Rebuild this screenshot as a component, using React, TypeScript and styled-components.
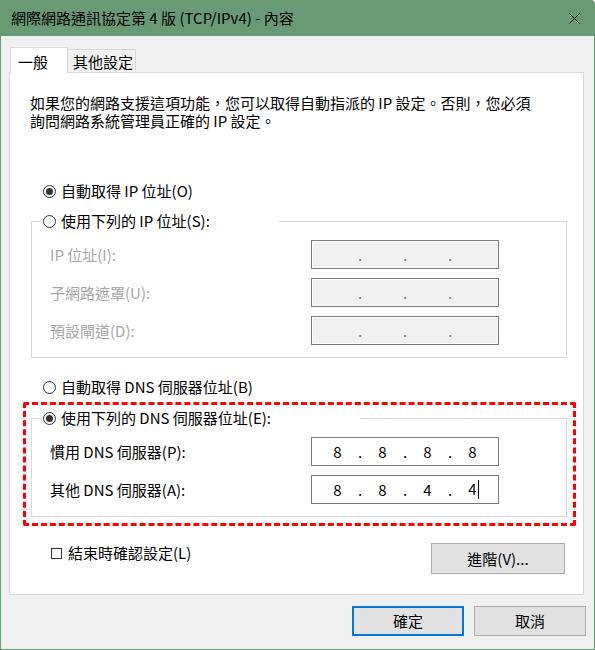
import React from 'react';
import styled, { createGlobalStyle } from 'styled-components';

const GlobalStyle = createGlobalStyle`
  html, body {
    margin: 0;
    padding: 0;
    background: #ffffff;
  }
  body {
    font-family: "Noto Sans CJK TC", "Noto Sans", sans-serif;
    font-size: 15px;
    color: #000000;
  }
  * {
    box-sizing: border-box;
  }
`;

const Window = styled.div`
  width: 595px;
  height: 650px;
  background: #689a76;
  padding: 0 1px 1px;
  border-top-right-radius: 4px;
  display: flex;
  flex-direction: column;
`;

const TitleBar = styled.div`
  height: 36px;
  flex: none;
  display: flex;
  align-items: center;
  justify-content: space-between;
  padding-left: 10px;
`;

const Title = styled.div`
  font-size: 15px;
  line-height: 18px;
  color: #000;
`;

const CloseButton = styled.div`
  width: 40px;
  height: 36px;
  display: flex;
  align-items: center;
  justify-content: center;
`;

const Body = styled.div`
  flex: 1;
  background: #f0f0f0;
  display: flex;
  flex-direction: column;
  padding-top: 11px;
`;

const TabRow = styled.div`
  display: flex;
  align-items: flex-end;
  margin-left: 9px;
  margin-bottom: -1px;
  position: relative;
  z-index: 1;
`;

const Tab = styled.div<{ $active?: boolean }>`
  line-height: 18px;
  height: ${(p) => (p.$active ? '26px' : '24px')};
  width: ${(p) => (p.$active ? '58px' : '68px')};
  padding: ${(p) => (p.$active ? '5px 0 0 7px' : '3px 0 0 5px')};
  background: ${(p) => (p.$active ? '#ffffff' : '#f0f0f0')};
  border: 1px solid #d9d9d9;
  border-bottom: ${(p) => (p.$active ? 'none' : '1px solid #d9d9d9')};
  border-left: ${(p) => (p.$active ? '1px solid #d9d9d9' : 'none')};
`;

const Panel = styled.div`
  margin-left: 8px;
  width: 575px;
  background: #ffffff;
  border: 1px solid #d9d9d9;
  padding: 21px 0 20px;
  display: flex;
  flex-direction: column;
`;

const Intro = styled.p`
  margin: 0 0 0 20px;
  line-height: 18px;
`;

const RadioRow = styled.div<{ $top: number }>`
  display: flex;
  align-items: center;
  height: 18px;
  line-height: 18px;
  margin: ${(p) => p.$top}px 0 0 33px;
  gap: 5px;
`;

const RadioLabel = styled.div`
  display: flex;
  align-items: center;
  height: 18px;
  line-height: 18px;
  gap: 5px;
  padding-left: 1px;
`;

const Circle = styled.span<{ $checked?: boolean }>`
  width: 13px;
  height: 13px;
  flex: none;
  border: 1px solid #333333;
  border-radius: 50%;
  display: flex;
  align-items: center;
  justify-content: center;

  &::after {
    content: '';
    width: 7px;
    height: 7px;
    border-radius: 50%;
    background: #333333;
    display: ${(p) => (p.$checked ? 'block' : 'none')};
  }
`;

const Group = styled.fieldset<{ $top: number }>`
  margin: ${(p) => p.$top}px 0 0 21px;
  width: 536px;
  min-width: 0;
  border: 1px solid #d9d9d9;
  padding: 10px 0 12px 10px;
`;

const Legend = styled.legend<{ $width: number }>`
  padding: 0;
  width: ${(p) => p.$width}px;
  background: #ffffff;
`;

const FieldRow = styled.div`
  display: flex;
  align-items: center;
  height: 29px;
  padding-left: 8px;

  & + & {
    margin-top: 9px;
  }
`;

const FieldLabel = styled.div<{ $disabled?: boolean }>`
  width: 261px;
  line-height: 18px;
  color: ${(p) => (p.$disabled ? '#a6a6a6' : '#000000')};
`;

const IpField = styled.div<{ $disabled?: boolean }>`
  width: 188px;
  height: 29px;
  border: 1px solid #7a7a7a;
  background: ${(p) => (p.$disabled ? '#f0f0f0' : '#ffffff')};
  box-shadow: ${(p) => (p.$disabled ? 'inset 0 0 0 1px #ffffff' : 'none')};
  display: flex;
  align-items: center;
  justify-content: center;
  line-height: 18px;
  color: ${(p) => (p.$disabled ? '#7a7a7a' : '#000000')};
`;

const Octet = styled.span`
  width: 36px;
  text-align: center;
`;

const Dot = styled.span`
  width: 9px;
  text-align: center;
`;

const Caret = styled.span`
  display: inline-block;
  width: 1px;
  height: 19px;
  background: #000;
  vertical-align: -4px;
  margin: 0 -2px 0 1px;
`;

const Highlight = styled.div`
  margin: 6px 0 0 13px;
  width: 553px;
  border: 3px dashed #ff0000;
  border-radius: 2px;
  padding: 4px 6px 6px 5px;

  & > fieldset {
    margin: 0;
  }
`;

const FooterRow = styled.div`
  display: flex;
  justify-content: space-between;
  align-items: flex-start;
  margin: 17px 18px 0 41px;
`;

const CheckLabel = styled.div`
  display: flex;
  align-items: center;
  gap: 6px;
  height: 18px;
  line-height: 18px;
  margin-top: 1px;
`;

const CheckBox = styled.span`
  width: 11px;
  height: 11px;
  border: 1px solid #333333;
  flex: none;
`;

const Button = styled.div<{ $width: number; $height: number; $primary?: boolean }>`
  width: ${(p) => p.$width}px;
  height: ${(p) => p.$height}px;
  background: #e1e1e1;
  border: ${(p) => (p.$primary ? '2px solid #0078d7' : '1px solid #adadad')};
  display: flex;
  align-items: center;
  justify-content: center;
  line-height: 18px;
`;

const DialogButtons = styled.div`
  display: flex;
  justify-content: flex-end;
  gap: 10px;
  margin-top: 11px;
  padding-right: 8px;
`;

const ipRows = ['IP 位址(I):', '子網路遮罩(U):', '預設閘道(D):'];

function Address({ parts, disabled, caret }: { parts: string[]; disabled?: boolean; caret?: boolean }) {
  return (
    <IpField $disabled={disabled}>
      {parts.map((part, i) => (
        <React.Fragment key={i}>
          {i > 0 && <Dot>.</Dot>}
          <Octet>
            {part}
            {caret && i === parts.length - 1 && <Caret />}
          </Octet>
        </React.Fragment>
      ))}
    </IpField>
  );
}

export default function App() {
  return (
    <>
      <GlobalStyle />
      <Window>
        <TitleBar>
          <Title>網際網路通訊協定第 4 版 (TCP/IPv4) - 內容</Title>
          <CloseButton>
            <svg width="11" height="11" viewBox="0 0 11 11">
              <path d="M0.5 0.5 L10.5 10.5 M10.5 0.5 L0.5 10.5" stroke="#000" strokeWidth="1" />
            </svg>
          </CloseButton>
        </TitleBar>
        <Body>
          <TabRow>
            <Tab $active>一般</Tab>
            <Tab>其他設定</Tab>
          </TabRow>
          <Panel>
            <Intro>
              如果您的網路支援這項功能，您可以取得自動指派的 IP 設定。否則，您必須
              <br />
              詢問網路系統管理員正確的 IP 設定。
            </Intro>

            <RadioRow $top={52}>
              <Circle $checked />
              自動取得 IP 位址(O)
            </RadioRow>

            <Group $top={12}>
              <Legend $width={237}>
                <RadioLabel>
                  <Circle />
                  使用下列的 IP 位址(S):
                </RadioLabel>
              </Legend>
              {ipRows.map((label) => (
                <FieldRow key={label}>
                  <FieldLabel $disabled>{label}</FieldLabel>
                  <Address parts={['', '', '', '']} disabled />
                </FieldRow>
              ))}
            </Group>

            <RadioRow $top={20}>
              <Circle />
              自動取得 DNS 伺服器位址(B)
            </RadioRow>

            <Highlight>
              <Group $top={0}>
                <Legend $width={318}>
                  <RadioLabel>
                    <Circle $checked />
                    使用下列的 DNS 伺服器位址(E):
                  </RadioLabel>
                </Legend>
                <FieldRow>
                  <FieldLabel>慣用 DNS 伺服器(P):</FieldLabel>
                  <Address parts={['8', '8', '8', '8']} />
                </FieldRow>
                <FieldRow>
                  <FieldLabel>其他 DNS 伺服器(A):</FieldLabel>
                  <Address parts={['8', '8', '4', '4']} caret />
                </FieldRow>
              </Group>
            </Highlight>

            <FooterRow>
              <CheckLabel>
                <CheckBox />
                結束時確認設定(L)
              </CheckLabel>
              <Button $width={134} $height={31}>進階(V)...</Button>
            </FooterRow>
          </Panel>
          <DialogButtons>
            <Button $width={112} $height={30} $primary>確定</Button>
            <Button $width={112} $height={30}>取消</Button>
          </DialogButtons>
        </Body>
      </Window>
    </>
  );
}
